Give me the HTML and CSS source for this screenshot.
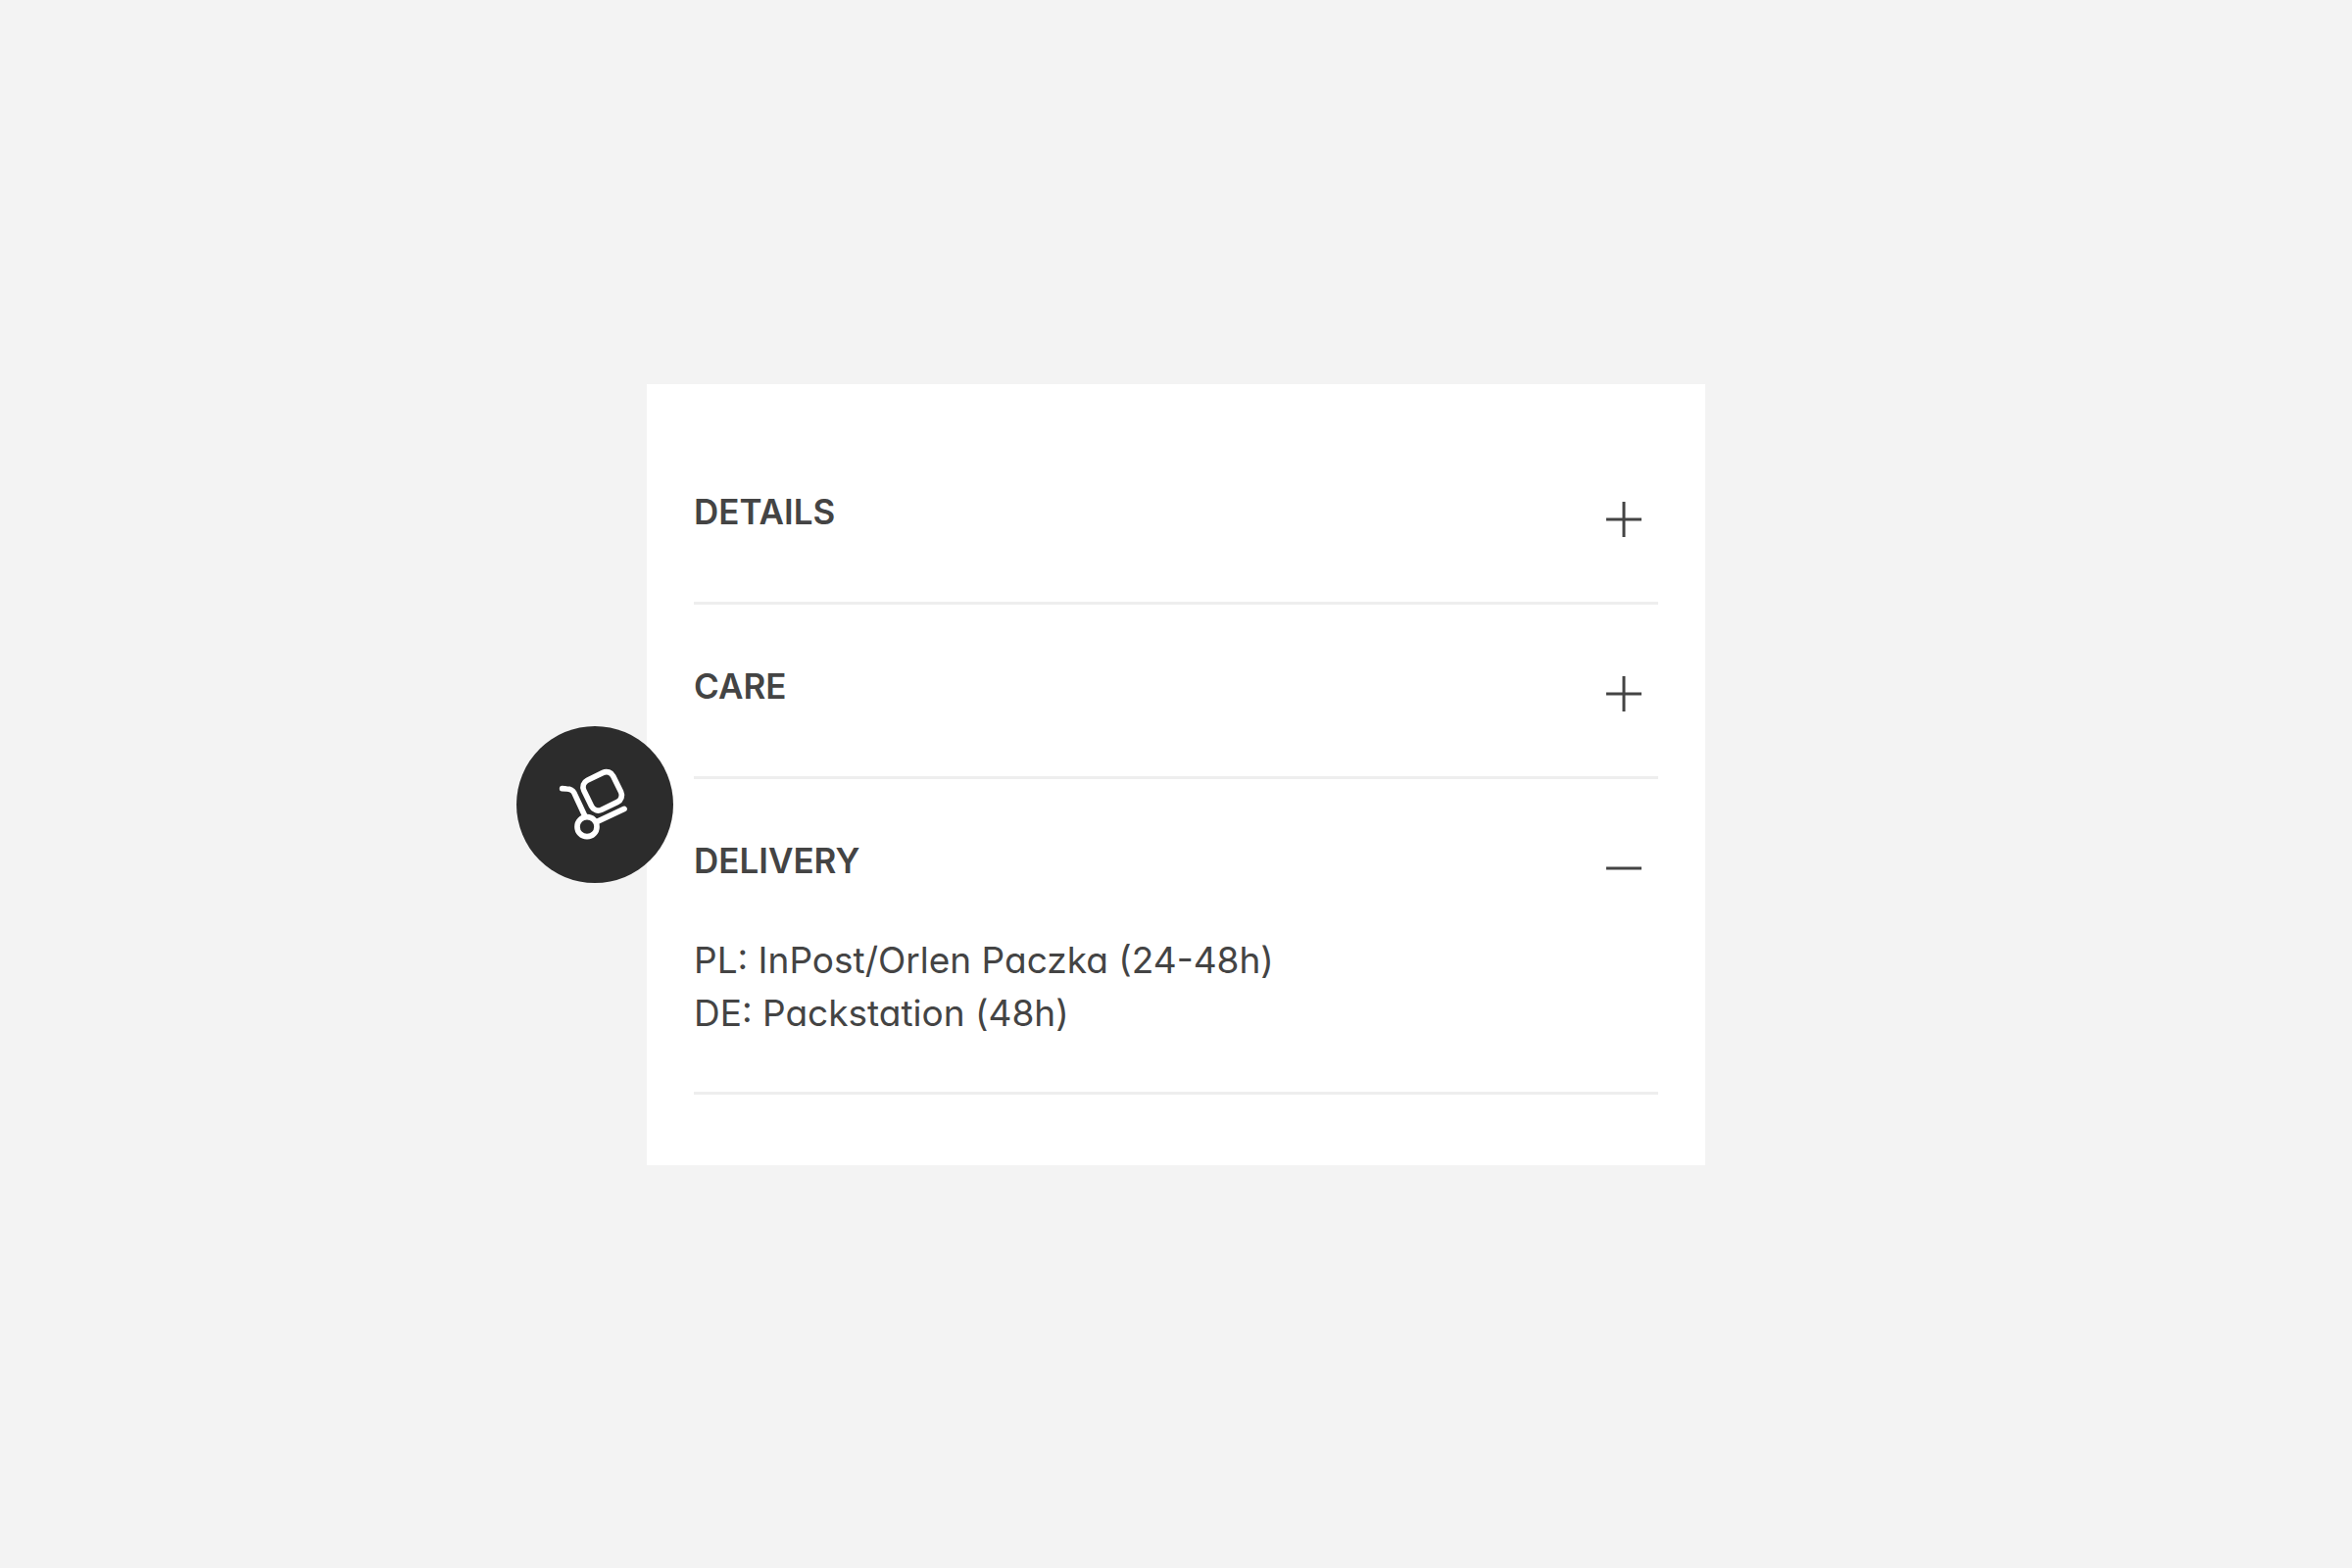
FILE: index.html
```html
<!DOCTYPE html>
<html lang="en">
<head>
    <meta charset="UTF-8">
    <meta name="viewport" content="width=device-width, initial-scale=1.0">
    <title>Product information</title>
    <link rel="stylesheet" href="styles.css">
</head>
<body>
    <main class="card">
        <details class="item">
            <summary>
                <h2>DETAILS</h2>
                <svg class="toggle" viewBox="0 0 70 70" aria-hidden="true">
                    <path d="M17 35h36"/>
                    <path class="toggle-bar" d="M35 17v36"/>
                </svg>
            </summary>
        </details>

        <details class="item">
            <summary>
                <h2>CARE</h2>
                <svg class="toggle" viewBox="0 0 70 70" aria-hidden="true">
                    <path d="M17 35h36"/>
                    <path class="toggle-bar" d="M35 17v36"/>
                </svg>
            </summary>
        </details>

        <details class="item" open>
            <summary>
                <h2>DELIVERY</h2>
                <svg class="toggle" viewBox="0 0 70 70" aria-hidden="true">
                    <path d="M17 35h36"/>
                    <path class="toggle-bar" d="M35 17v36"/>
                </svg>
            </summary>
            <p>PL: InPost/Orlen Paczka (24-48h)<br>DE: Packstation (48h)</p>
        </details>

        <div class="badge">
            <svg viewBox="0 0 480 480" aria-hidden="true">
                <path d="M140 191l14 1c12 0 18 3 23 13l33 71"/>
                <circle cx="216" cy="308" r="30"/>
                <path d="M247 292l83-39"/>
                <rect x="213" y="149" width="100" height="100" rx="23" transform="rotate(-26 263 199)"/>
            </svg>
        </div>
    </main>
</body>
</html>
```
FILE: styles.css
```css
* {
    box-sizing: border-box;
}

body {
    margin: 0;
    min-height: 100vh;
    padding-bottom: 20px;
    display: flex;
    justify-content: center;
    align-items: center;
    background-color: #f3f3f3;
    color: #444;
    font-family: 'Inter', sans-serif;
    font-size: 37px;
    line-height: 54px;
    /* single-storey a */
    font-feature-settings: "cv11";
}

.card {
    position: relative;
    width: 45%;
    padding: 47px 48px 72px;
    background-color: #fff;
}

.item {
    padding: 56px 0 49px;
    border-bottom: 3px solid #eee;
}

summary {
    display: flex;
    justify-content: space-between;
    align-items: flex-start;
    list-style: none;
    cursor: pointer;
}

h2 {
    margin: 0;
    font-size: 35px;
    font-weight: 600;
}

.toggle {
    width: 70px;
    height: 70px;
    fill: none;
    stroke: #444;
    stroke-width: 3;
}

.item[open] .toggle-bar {
    display: none;
}

.item p {
    margin: 32px 0 4px;
}

/* hangs over the left edge of the card */
.badge {
    position: absolute;
    top: 349px;
    left: -133px;
    width: 160px;
    height: 160px;
    border-radius: 50%;
    background-color: #2c2c2c;
}

.badge svg {
    display: block;
    fill: none;
    stroke: #fff;
    stroke-width: 17;
    stroke-linecap: round;
    stroke-linejoin: round;
}
```
